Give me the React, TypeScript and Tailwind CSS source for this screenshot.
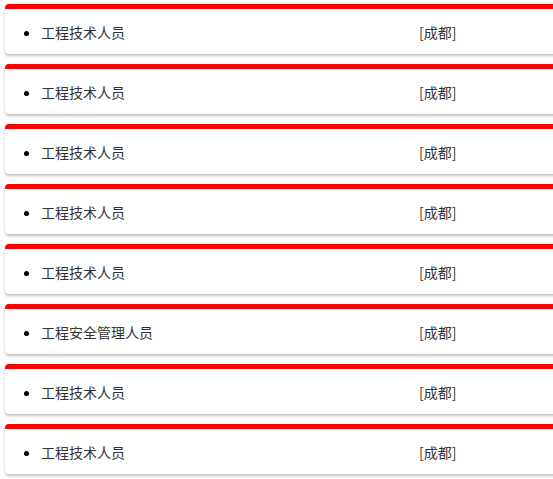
const jobs = [
  '工程技术人员',
  '工程技术人员',
  '工程技术人员',
  '工程技术人员',
  '工程技术人员',
  '工程安全管理人员',
  '工程技术人员',
  '工程技术人员',
];

export default function App() {
  return (
    <div
      className="w-[553px] h-[479px] overflow-hidden bg-white pt-1 flex flex-col gap-[10px]"
      style={{ fontFamily: '"Noto Sans CJK SC", "Noto Sans", sans-serif' }}
    >
      {jobs.map((job, i) => (
        <div
          key={i}
          className="ml-[5px] w-[600px] h-[50px] shrink-0 border-t-[5px] border-[#ff0000] rounded-[4px] bg-white shadow-[0_2px_3px_rgba(0,0,0,0.25)]"
        >
          <ul className="list-disc pl-[36px] pt-[13px] text-[14px] leading-[20px] text-[#333]">
            <li className="marker:text-black">
              <span className="inline-block w-[378px]">{job}</span>
              <span>[成都]</span>
            </li>
          </ul>
        </div>
      ))}
    </div>
  );
}
